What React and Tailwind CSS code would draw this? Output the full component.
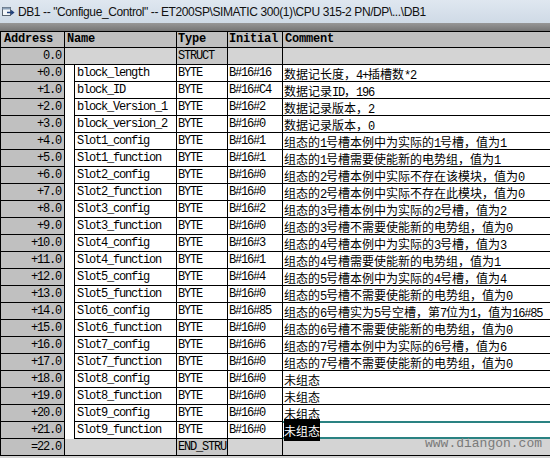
import React from 'react';

const rows = [
  ['+0.0', 'block_length', 'BYTE', 'B#16#16', '数据记长度，4+插槽数*2'],
  ['+1.0', 'block_ID', 'BYTE', 'B#16#C4', '数据记录ID，196'],
  ['+2.0', 'block_Version_1', 'BYTE', 'B#16#2', '数据记录版本，2'],
  ['+3.0', 'block_version_2', 'BYTE', 'B#16#0', '数据记录版本，0'],
  ['+4.0', 'Slot1_config', 'BYTE', 'B#16#1', '组态的1号槽本例中为实际的1号槽，值为1'],
  ['+5.0', 'Slot1_function', 'BYTE', 'B#16#1', '组态的1号槽需要使能新的电势组，值为1'],
  ['+6.0', 'Slot2_config', 'BYTE', 'B#16#0', '组态的2号槽本例中实际不存在该模块，值为0'],
  ['+7.0', 'Slot2_function', 'BYTE', 'B#16#0', '组态的2号槽本例中实际不存在此模块，值为0'],
  ['+8.0', 'Slot3_config', 'BYTE', 'B#16#2', '组态的3号槽本例中为实际的2号槽，值为2'],
  ['+9.0', 'Slot3_function', 'BYTE', 'B#16#0', '组态的3号槽不需要使能新的电势组，值为0'],
  ['+10.0', 'Slot4_config', 'BYTE', 'B#16#3', '组态的4号槽本例中为实际的3号槽，值为3'],
  ['+11.0', 'Slot4_function', 'BYTE', 'B#16#1', '组态的4号槽需要使能新的电势组，值为1'],
  ['+12.0', 'Slot5_config', 'BYTE', 'B#16#4', '组态的5号槽本例中为实际的4号槽，值为4'],
  ['+13.0', 'Slot5_function', 'BYTE', 'B#16#0', '组态的5号槽不需要使能新的电势组，值为0'],
  ['+14.0', 'Slot6_config', 'BYTE', 'B#16#85', '组态的6号槽实为5号空槽，第7位为1，值为16#85'],
  ['+15.0', 'Slot6_function', 'BYTE', 'B#16#0', '组态的6号槽不需要使能新的电势组，值为0'],
  ['+16.0', 'Slot7_config', 'BYTE', 'B#16#6', '组态的7号槽本例中为实际的6号槽，值为6'],
  ['+17.0', 'Slot7_function', 'BYTE', 'B#16#0', '组态的7号槽不需要使能新的电势组，值为0'],
  ['+18.0', 'Slot8_config', 'BYTE', 'B#16#0', '未组态'],
  ['+19.0', 'Slot8_function', 'BYTE', 'B#16#0', '未组态'],
  ['+20.0', 'Slot9_config', 'BYTE', 'B#16#0', '未组态'],
  ['+21.0', 'Slot9_function', 'BYTE', 'B#16#0', '未组态'],
];

const mono = "font-['Liberation_Mono',monospace] text-[12px] tracking-[-1.2px]";

// ascii runs in the narrow mono face, CJK in Noto at 12px
function Mixed({ text }) {
  const parts = text.split(/([\x00-\x7f]+)/).filter(Boolean);
  return (
    <>
      {parts.map((p, i) =>
        /^[\x00-\x7f]+$/.test(p) ? (
          <span key={i} className={mono}>{p}</span>
        ) : (
          <span key={i} className="font-['Noto_Sans_CJK_SC',sans-serif] text-[12px]">{p}</span>
        )
      )}
    </>
  );
}

function TitleIcon() {
  return (
    <svg width="13" height="11" viewBox="0 0 13 11" className="shrink-0">
      <rect x="0.5" y="1.5" width="8" height="8" fill="#f4f6f8" stroke="#5a6470" />
      <rect x="0.5" y="1.5" width="8" height="2" fill="#8aa0b8" />
      <path d="M5 6.5h6M9 4.5l2.5 2-2.5 2" fill="none" stroke="#1f3f7a" strokeWidth="1.3" />
    </svg>
  );
}

function StructRow({ addr, type }) {
  return (
    <div className="flex h-[17px] leading-[16px]">
      <div className={`w-[65px] shrink-0 border-l border-r border-b border-black bg-[#c0c0c0] text-right pr-[3px] ${mono}`}>{addr}</div>
      <div className="w-[112px] shrink-0 border-r border-b border-black bg-[#d4d4d4]" />
      <div className={`w-[51px] shrink-0 border-r border-b border-black bg-[#c8c8c8] pl-[1px] overflow-hidden whitespace-nowrap ${mono}`}>{type}</div>
      <div className="w-[55px] shrink-0 border-r border-b border-black bg-[#d4d4d4]" />
      <div className="flex-1 border-b border-black bg-[#d4d4d4]" />
    </div>
  );
}

export default function App() {
  return (
    <div className="relative w-[550px] h-[458px] overflow-hidden bg-[#d4d4d4] text-black">
      <div className="h-[23px] flex items-center gap-[3px] pl-[2px] bg-gradient-to-b from-[#dfe7f0] to-[#cfdae6]">
        <TitleIcon />
        <span className="font-['Liberation_Sans',sans-serif] text-[12px] tracking-[-0.4px] whitespace-nowrap text-[#111]">
          DB1 -- "Configue_Control" -- ET200SP\SIMATIC 300(1)\CPU 315-2 PN/DP\...\DB1
        </span>
      </div>
      <div className="h-[8px] bg-gradient-to-b from-[#979797] to-[#767676]" />

      <div className="flex h-[17px] leading-[15px] border-y border-black bg-[#c0c0c0] font-['Liberation_Mono',monospace] text-[12px] font-bold tracking-[-0.2px]">
        <div className="w-[65px] shrink-0 border-l border-r border-black pl-[3px]">Address</div>
        <div className="w-[112px] shrink-0 border-r border-black pl-[2px]">Name</div>
        <div className="w-[51px] shrink-0 border-r border-black pl-[1px]">Type</div>
        <div className="w-[55px] shrink-0 border-r border-black pl-[1px]">Initial</div>
        <div className="flex-1 pl-[2px]">Comment</div>
      </div>

      <StructRow addr="0.0" type="STRUCT" />

      {rows.map(([addr, name, type, init, comment], i) => {
        const editing = i === rows.length - 1;
        return (
          <div key={addr} className="flex h-[17px] leading-[16px] bg-white">
            <div className={`w-[65px] shrink-0 border-l border-r border-b border-black bg-[#c0c0c0] text-right pr-[3px] ${mono}`}>{addr}</div>
            <div className="w-[10px] shrink-0 border-r border-black" />
            <div className={`w-[102px] shrink-0 border-r border-b border-black pl-[2px] whitespace-nowrap overflow-hidden ${mono}`}>{name}</div>
            <div className={`w-[51px] shrink-0 border-r border-b border-black pl-[1px] ${mono}`}>{type}</div>
            <div className={`w-[55px] shrink-0 border-r border-b border-black pl-[1px] ${mono}`}>{init}</div>
            <div className="relative flex-1 border-b border-black pl-[1px] whitespace-nowrap">
              {editing ? (
                <>
                  <div className="absolute left-0 right-0 -top-[1px] -bottom-[1px] border-y-2 border-[#2a8282]" />
                  <span className="relative bg-black text-white">
                    <Mixed text={comment} />
                  </span>
                </>
              ) : (
                <Mixed text={comment} />
              )}
            </div>
          </div>
        );
      })}

      <StructRow addr="=22.0" type="END_STRU" />

      <div className="absolute left-[425px] top-[437px] font-['Liberation_Mono',monospace] text-[13px] leading-[14px] text-[#7a7a7a]">
        www.diangon.com
      </div>
    </div>
  );
}
